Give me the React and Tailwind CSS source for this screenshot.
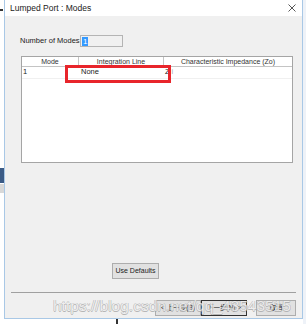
export default function App() {
  const font = { fontFamily: '"Liberation Sans", "Noto Sans", "Noto Sans CJK SC", sans-serif' }

  return (
    <div className="relative w-[306px] h-[324px] bg-white overflow-hidden" style={font}>
      {/* background app bits peeking out */}
      <div className="absolute left-0 top-[9px] w-[3px] h-[2px] bg-[#333]" />
      <div className="absolute left-0 top-[168px] w-[4px] h-[15px] bg-[#3b5b86]" />
      <div className="absolute left-0 top-[184px] w-[4px] h-[9px] bg-[#d8d8d8]" />
      <div className="absolute right-0 top-0 w-[3px] h-[324px] bg-[#eef2f8]" />
      <div className="absolute left-[116px] top-[319px] w-[2px] h-[5px] bg-[#333]" />

      {/* dialog */}
      <div className="absolute left-[4px] top-0 w-[299px] h-[319px] border border-t-0 border-[#a9c8e6] bg-[#f0f0f0] flex flex-col">
        <div className="h-[16px] bg-white flex items-center justify-between pl-[5px] pr-[5px]">
          <span className="text-[8.5px] text-[#222]">Lumped Port : Modes</span>
          <svg width="8" height="8" viewBox="0 0 8 8" className="mr-[1px]">
            <path d="M0.5 0.5 L7.5 7.5 M7.5 0.5 L0.5 7.5" stroke="#444" strokeWidth="0.9" />
          </svg>
        </div>

        <div className="flex-1 flex flex-col relative">
          <div className="flex items-center mt-[19px] ml-[15px] h-[12px]">
            <span className="text-[7.5px] text-[#222] w-[60px] whitespace-nowrap">Number of Modes:</span>
            <div className="w-[43px] h-[12px] border border-[#b4b4b4] bg-[#f0f0f0] flex items-center pl-[1px]">
              <span className="bg-[#3399ff] text-white text-[8px] leading-[9px] px-[1px]">1</span>
            </div>
          </div>

          <div className="ml-[16px] mt-[9px] w-[272px] h-[107px] border border-[#a5a5a5] bg-white">
            <div className="grid grid-cols-[57px_85px_1fr] h-[9px] text-[7px] text-[#333] leading-[9px]">
              <div className="text-center border-r border-b border-[#c4c4c4]">Mode</div>
              <div className="text-center border-r border-b border-[#c4c4c4]">Integration Line</div>
              <div className="text-center border-b border-[#c4c4c4]">Characteristic Impedance (Zo)</div>
            </div>
            <div className="grid grid-cols-[57px_85px_1fr] h-[13px] text-[7.5px] text-[#222] leading-[12px] border-b border-[#f0f0f0]">
              <div className="pl-[1px]">1</div>
              <div className="pl-[2px]">None</div>
              <div className="pl-[1px]">Z<span className="ml-[2px] text-[#aaa]">i</span></div>
            </div>
          </div>

          {/* red highlight box */}
          <div className="absolute left-[60px] top-[49px] w-[106px] h-[18px] border-[3px] border-[#e8252b]" />

          <div className="flex-1" />

          <div className="flex justify-start ml-[107px]">
            <button className="w-[47px] h-[16px] border border-[#adadad] bg-[#e1e1e1] text-[7px] text-[#222]">
              Use Defaults
            </button>
          </div>

          <div className="mx-[6px] mt-[13px] h-px bg-[#a0a0a0]" />

          <div className="flex justify-end items-center mt-[7px] mb-[2px] pr-[6px]">
            <button className="w-[46px] h-[16px] border border-[#adadad] bg-[#e1e1e1] text-[6.5px] text-[#222]">&lt; 上一步(B)</button>
            <button className="w-[46px] h-[16px] border border-[#333] bg-[#e1e1e1] text-[6.5px] text-[#222]">下一步(N) &gt;</button>
            <button className="ml-[9px] w-[40px] h-[16px] border border-[#adadad] bg-[#e1e1e1] text-[6.5px] text-[#222]">取消</button>
          </div>

          {/* watermark */}
          <div
            className="absolute left-[48px] bottom-[3px] text-[15.5px] leading-[18px] text-white/80 whitespace-nowrap opacity-80"
            style={{
              fontFamily: '"Liberation Sans", Arial, sans-serif',
              textShadow: '0.5px 0 0 #a8a8a8, -0.5px 0 0 #a8a8a8, 0 0.5px 0 #a8a8a8, 0 -0.5px 0 #a8a8a8',
            }}
          >
            https://blog.csdn.net/qq_43543515
          </div>
        </div>
      </div>
    </div>
  )
}
